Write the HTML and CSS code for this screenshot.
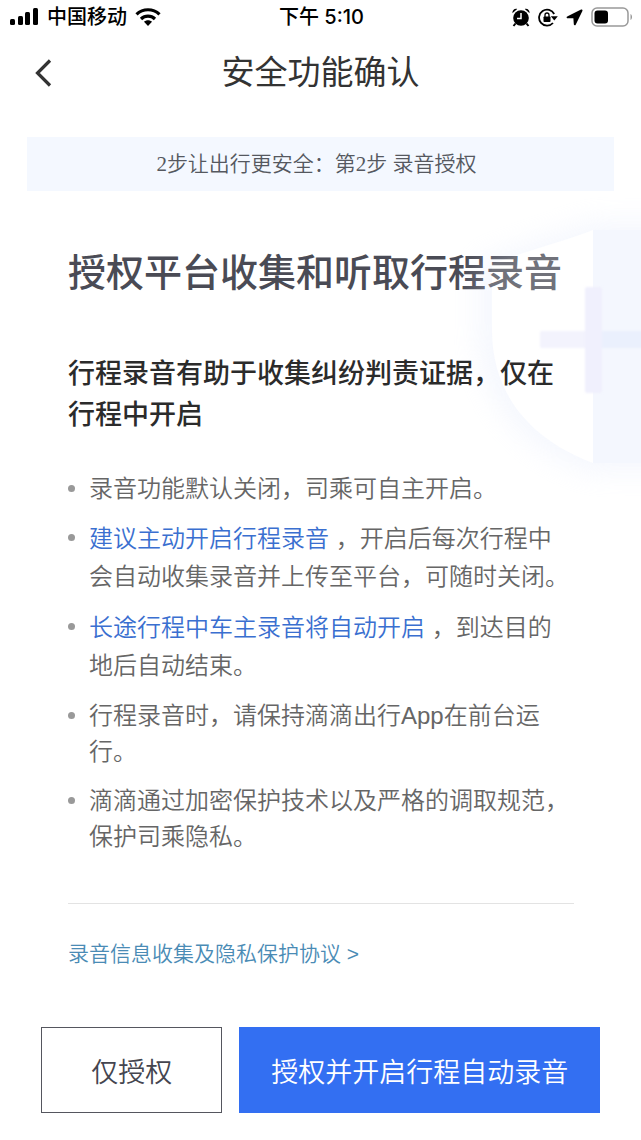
FILE: index.html
```html
<!doctype html>
<html lang="zh-CN">
  <head>
    <meta charset="UTF-8" />
    <meta name="viewport" content="width=device-width, initial-scale=1.0" />
    <title>安全功能确认</title>
    <link rel="stylesheet" href="styles.css">
  </head>
  <body>
    <div class="status-bar">
      <div class="status-left">
        <svg width="29" height="18" viewBox="0 0 29 18" aria-hidden="true">
          <rect x="0" y="11" width="5" height="6" rx="1.5" />
          <rect x="8" y="8" width="5" height="9" rx="1.5" />
          <rect x="15" y="4" width="5" height="13" rx="1.5" />
          <rect x="23" y="0" width="5" height="17" rx="1.5" />
        </svg>
        <span>中国移动</span>
        <svg width="26" height="18" viewBox="0 0 26 18" aria-hidden="true">
          <g fill="none" stroke="#000" stroke-width="3.2">
            <path d="M1.5 6.4C8 .2 18 .2 24.5 6.4" />
            <path d="M6 11c4-3.8 10-3.8 14 0" />
          </g>
          <path d="M9 13.7c2.400-2 5.600-2 8 0L13 18z" />
        </svg>
      </div>
      <div class="status-time">下午 5:10</div>
      <div class="status-right">
        <svg width="18" height="19" viewBox="0 0 18 19" aria-hidden="true">
          <circle cx="9" cy="10" r="7.8" />
          <path d="M.4 5.2C.3 2 2.300.4 5.200.9zM17.600 5.200C17.700 2 15.700.4 12.800.9z" />
          <path d="M3.5 15.5l-2 2.500M14.500 15.500l2 2.500" stroke="#000" stroke-width="2" />
          <path d="M9 5v5.5H5" fill="none" stroke="#fff" stroke-width="1.5" />
        </svg>
        <svg width="20" height="19" viewBox="0 0 20 19" aria-hidden="true">
          <path d="M16.200 6A8 8 0 1 0 15 15" fill="none" stroke="#000" stroke-width="1.8" />
          <path d="M12.800 8.200H19.800L16.300 12.600z" />
          <rect x="5.5" y="8.5" width="7" height="5.5" rx=".8" />
          <path d="M7 9V7a2 2 0 0 1 4 0v2" fill="none" stroke="#000" stroke-width="1.3" />
        </svg>
        <svg width="17" height="17" viewBox="0 0 17 17" aria-hidden="true">
          <path d="M15.500 1.500L1.600 8.300H8.300L8.800 15.300z" stroke="#000" stroke-width="2" stroke-linejoin="round" />
        </svg>
        <svg width="42" height="20" viewBox="0 0 42 20" aria-hidden="true">
          <rect x="1" y="1" width="36" height="18" rx="5" fill="none" stroke="#999" stroke-width="1.5" />
          <rect x="3.5" y="3.5" width="13.500" height="13" rx="3" />
          <path d="M39.500 7c2 1 2 5 0 6z" fill="#999" />
        </svg>
      </div>
    </div>

    <header class="nav">
      <button class="back" aria-label="返回">
        <svg width="17" height="28" viewBox="0 0 17 28" aria-hidden="true">
          <path d="M15 1.5L2.500 14 15 26.500" fill="none" stroke="#333" stroke-width="3.2" />
        </svg>
      </button>
      <h1>安全功能确认</h1>
    </header>

    <p class="step">2步让出行更安全：第2步 录音授权</p>

    <main class="content">
      <svg class="shield" width="200" height="330" viewBox="0 0 200 330" aria-hidden="true">
        <defs>
          <filter id="glow" x="-40%" y="-30%" width="180%" height="160%">
            <feGaussianBlur stdDeviation="14" />
          </filter>
          <filter id="soft">
            <feGaussianBlur stdDeviation="1" />
          </filter>
          <clipPath id="around">
            <path clip-rule="evenodd" d="M0 0H200V330H0zM152 48C121 60 88 68 51 82V148C51 218 96 260 152 281H200V48z" />
          </clipPath>
        </defs>
        <g clip-path="url(#around)">
          <path d="M152 40C112 54 76 66 38 80V152C38 224 92 272 152 290H240V40z" fill="#dfe7fb" opacity=".32" filter="url(#glow)" />
        </g>
        <path d="M152 48C121 60 88 68 51 82V148C51 218 96 260 152 281z" fill="#fff" opacity=".22" />
        <path d="M152 48H200V281H152z" fill="#f4f7fe" />
        <g filter="url(#soft)">
          <rect x="99" y="149" width="50" height="17" rx="2" fill="#f3f3fd" />
          <rect x="152" y="149" width="60" height="17" fill="#eaf0fd" />
          <rect x="144" y="105" width="17" height="106" rx="2" fill="#f0f0fd" />
        </g>
      </svg>

      <h2>授权平台收集和听取行程录音</h2>
      <h3>行程录音有助于收集纠纷判责证据，仅在行程中开启</h3>

      <ul class="rules">
        <li>录音功能默认关闭，司乘可自主开启。</li>
        <li class="marked"><em>建议主动开启行程录音</em> ，开启后每次行程中会自动收集录音并上传至平台，可随时关闭。</li>
        <li class="marked"><em>长途行程中车主录音将自动开启</em> ，到达目的地后自动结束。</li>
        <li>行程录音时，请保持滴滴出行App在前台运行。</li>
        <li>滴滴通过加密保护技术以及严格的调取规范，保护司乘隐私。</li>
      </ul>

      <div class="agreement">
        <a href="#">录音信息收集及隐私保护协议 &gt;</a>
      </div>
    </main>

    <footer class="actions">
      <button class="btn">仅授权</button>
      <button class="btn btn-primary">授权并开启行程自动录音</button>
    </footer>
  </body>
</html>
```
FILE: styles.css
```css
* {
  box-sizing: border-box;
}
body {
  margin: 0;
  background-color: #fff;
  color: #333;
  font-family: 'Liberation Sans', 'Noto Sans CJK SC', sans-serif;
  overflow-x: hidden;
}
h1,
h2,
h3,
p,
ul {
  margin: 0;
  padding: 0;
}
button {
  font-family: inherit;
  cursor: pointer;
}
svg {
  display: block;
}

.status-bar {
  display: grid;
  grid-template-columns: 1fr auto 1fr;
  align-items: center;
  height: 34px;
  padding: 0 8px 0 10px;
  color: #000;
  font-family: Inter, 'Noto Sans CJK SC', sans-serif;
  font-size: 20px;
  font-weight: 500;
  line-height: 34px;
}
.status-left,
.status-right {
  display: flex;
  align-items: center;
  gap: 8px;
}
.status-right {
  justify-content: flex-end;
}

.nav {
  display: grid;
  grid-template-columns: 60px 1fr 60px;
  align-items: center;
  height: 78px;
}
.back {
  padding: 0 0 0 35px;
  border: none;
  background: none;
}
.nav h1 {
  font-size: 33px;
  font-weight: 400;
  line-height: 78px;
  text-align: center;
}

.step {
  margin: 25px 27px 0;
  padding: 1px 8px 0 0;
  background-color: #f4f8ff;
  color: #55585f;
  font-family: 'Liberation Serif', 'Noto Sans CJK SC', serif;
  font-size: 21px;
  font-weight: 350;
  line-height: 53px;
  text-align: center;
}

.content {
  position: relative;
  padding: 57px 67px 0 68px;
}
.content h2 {
  color: #4a4b55;
  font-size: 38px;
  font-weight: 500;
  line-height: 50px;
  white-space: nowrap;
}
.content h3 {
  position: relative;
  z-index: 2;
  margin-top: 56px;
  color: #2b2b2b;
  font-size: 27px;
  font-weight: 500;
  line-height: 41px;
}
/* lies over the end of the heading */
.shield {
  position: absolute;
  z-index: 1;
  top: -9px;
  right: 0;
  pointer-events: none;
}

.rules {
  position: relative;
  z-index: 2;
  margin-top: 35px;
  list-style: none;
}
.rules li {
  position: relative;
  padding-left: 21px;
  color: #666;
  font-size: 24px;
  font-weight: 350;
  line-height: 36px;
}
.rules li + li {
  margin-top: 13px;
}
.rules .marked {
  line-height: 38px;
}
.rules li::before {
  content: '';
  position: absolute;
  top: 14px;
  left: 0;
  width: 7px;
  height: 7px;
  border-radius: 50%;
  background-color: #999;
}
.rules em {
  color: #3a6fd0;
  font-style: normal;
}

.agreement {
  margin-top: 48px;
  padding-top: 35px;
  border-top: 1px solid #e3e3e3;
  font-size: 21px;
  font-weight: 350;
  line-height: 30px;
}
.agreement a {
  color: #4a8bb5;
  text-decoration: none;
}

.actions {
  display: flex;
  gap: 17px;
  padding: 58px 41px 27px;
}
.btn {
  flex: 1 1 0;
  height: 86px;
  padding: 0;
  border: 1px solid #55565e;
  background-color: #fff;
  color: #44454f;
  font-size: 27px;
  font-weight: 350;
  white-space: nowrap;
}
.btn-primary {
  flex-grow: 2;
  border-color: #336ff2;
  background-color: #336ff2;
  color: #fff;
}
```
